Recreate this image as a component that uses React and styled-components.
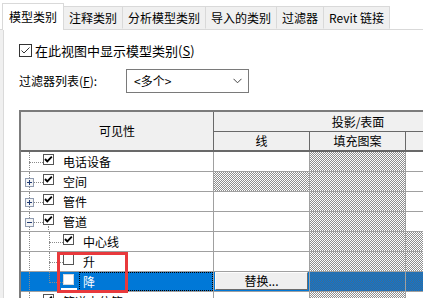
import React from 'react';
import styled, { createGlobalStyle, css } from 'styled-components';

const Global = createGlobalStyle`
  html, body { margin: 0; padding: 0; background: #fff; }
  body {
    font-family: "Noto Sans CJK SC", "Noto Sans", "Liberation Sans", sans-serif;
    font-size: 12px;
    color: #000;
  }
`;

const Root = styled.div`
  width: 423px;
  height: 298px;
  overflow: hidden;
  background: #fff;
  display: flex;
  flex-direction: column;
`;

const TabBar = styled.div`
  flex: none;
  height: 30px;
  box-sizing: border-box;
  display: flex;
  align-items: flex-end;
  padding-left: 2px;
  border-bottom: 1px solid #d9d9d9;
`;

const Tab = styled.div`
  position: relative;
  box-sizing: border-box;
  display: flex;
  align-items: center;
  white-space: nowrap;
  line-height: 14px;
  height: ${p => (p.$active ? 27 : 23)}px;
  padding: 0 ${p => (p.$active ? 6 : 5)}px;
  margin-left: ${p => (p.$first ? 0 : -1)}px;
  margin-bottom: ${p => (p.$active ? -1 : 0)}px;
  border: 1px solid #d9d9d9;
  border-bottom: ${p => (p.$active ? 'none' : '1px solid transparent')};
  background: ${p => (p.$active ? '#fff' : '#f0f0f0')};
  z-index: ${p => (p.$active ? 2 : 1)};
`;

const Body = styled.div`
  flex: 1;
  display: flex;
  min-height: 0;
  border-left: 3px solid #f0f0f0;
`;

const Panel = styled.div`
  flex: 1;
  min-width: 0;
  overflow: hidden;
  background: #fff;
  border-left: 1px solid #dadada;
  padding: 14px 0 0 15px;
  display: flex;
  flex-direction: column;
  align-items: flex-start;
`;

const ShowRow = styled.label`
  display: flex;
  align-items: center;
  height: 13px;
  gap: 3px;
  font-size: 13px;
  line-height: 13px;
  white-space: nowrap;
`;

const FilterRow = styled.div`
  display: flex;
  align-items: center;
  margin-top: 12px;
  height: 24px;
`;

const FilterLabel = styled.span`
  width: 107px;
  white-space: nowrap;
  line-height: 14px;
`;

const Select = styled.div`
  box-sizing: border-box;
  width: 123px;
  height: 24px;
  border: 1px solid #7a7a7a;
  background: #fff;
  display: flex;
  align-items: center;
  justify-content: space-between;
  padding: 0 6px 0 7px;
  line-height: 14px;
`;

const Table = styled.div`
  position: relative;
  flex: none;
  margin-top: 17px;
  width: 483px;
  border-top: 2px solid #7c7c7c;
  border-left: 2px solid #7c7c7c;
`;

const Header = styled.div`
  display: grid;
  grid-template-columns: 193px 96px 96px 96px;
  grid-template-rows: 20px 18px;
  background: #f0f0f0;
  border-bottom: 2px solid #696969;
`;

const HeadCell = styled.div`
  box-sizing: border-box;
  display: flex;
  align-items: center;
  justify-content: center;
  white-space: nowrap;
  line-height: 14px;
  ${p => p.$span && css`grid-row: 1 / 3; border-right: 1px solid #696969;`}
  ${p => p.$group && css`grid-column: 2 / 5; border-bottom: 1px solid #696969;`}
  ${p => p.$sub && css`border-right: 1px solid #696969;`}
`;

const DataRow = styled.div`
  display: grid;
  grid-template-columns: 193px 96px 96px 96px;
  height: 20px;
  box-sizing: border-box;
  border-bottom: 1px solid #a0a0a0;
`;

const Cell = styled.div`
  box-sizing: border-box;
  border-right: 1px solid #a0a0a0;
  display: flex;
  align-items: stretch;
  overflow: hidden;
  background: ${p =>
    p.$selected
      ? p.$hatch
        ? 'repeating-conic-gradient(#41698f 0 25%, #0a78d4 0 50%) 0 0 / 2px 2px'
        : '#0078d7'
      : p.$hatch
        ? 'repeating-conic-gradient(#8e8e8e 0 25%, #ffffff 0 50%) 0 0 / 2px 2px'
        : '#fff'};
  padding: ${p => (p.$button ? '0 0 1px 1px' : '0')};
`;

const Gutter = styled.div`
  position: relative;
  flex: none;
  width: ${p => p.$w}px;
  &::before {
    content: '';
    display: ${p => (p.$v ? 'block' : 'none')};
    position: absolute;
    left: ${p => p.$x}px;
    top: 0;
    ${p => (p.$v === 'half' ? 'height: 11px;' : 'bottom: -1px;')}
    border-left: 1px dotted #8a8a8a;
  }
  &::after {
    content: '';
    display: ${p => (p.$h ? 'block' : 'none')};
    position: absolute;
    left: ${p => p.$x}px;
    right: 0;
    top: 10px;
    border-top: 1px dotted #8a8a8a;
  }
`;

const ExpanderBox = styled.svg`
  position: absolute;
  left: 4px;
  top: 6px;
  z-index: 1;
`;

const CheckSlot = styled.div`
  position: relative;
  flex: none;
  width: 11px;
  padding-top: 2px;
  &::after {
    content: '';
    display: ${p => (p.$stem ? 'block' : 'none')};
    position: absolute;
    left: 5px;
    top: 14px;
    bottom: -1px;
    border-left: 1px dotted #8a8a8a;
  }
  &::before {
    content: '';
    display: ${p => (p.$focus ? 'block' : 'none')};
    position: absolute;
    left: -2px;
    width: 16px;
    top: 16px;
    height: 2px;
    background: #fff;
  }
`;

const Label = styled.div`
  flex: 1;
  margin-left: 5px;
  padding-left: 4px;
  line-height: 19px;
  white-space: nowrap;
  color: ${p => (p.$selected ? '#fff' : '#000')};
  ${p => p.$selected && css`outline: 1px dotted #000; outline-offset: -1px;`}
`;

const ReplaceButton = styled.button`
  flex: 1;
  margin: 0;
  padding: 0;
  box-sizing: border-box;
  font: inherit;
  font-size: 12px;
  line-height: 14px;
  color: #000;
  background: #efefef;
  border: 1px solid;
  border-color: #fdfdfd #6b6b6b #6b6b6b #fdfdfd;
  margin-right: 1px;
`;

const RedMark = styled.div`
  position: absolute;
  left: 36px;
  top: 140px;
  width: 71px;
  height: 41px;
  box-sizing: border-box;
  border: 3px solid #e8393c;
  pointer-events: none;
`;

function Check({ checked, size = 11, thin, light }) {
  return (
    <svg width={size} height={size} viewBox={`0 0 ${size} ${size}`} style={{ display: 'block' }}>
      <rect x="0.5" y="0.5" width={size - 1} height={size - 1} fill="#fff" stroke={light ? '#d8d8d8' : thin ? '#333' : '#555'} />
      {checked && (thin ? (
        <path d="M2.5 6.5 L5 9 L10.5 3.5" fill="none" stroke="#333" strokeWidth="1" />
      ) : (
        <path d="M2 5 L4.3 7.4 L8.8 2.6" fill="none" stroke="#000" strokeWidth="1.9" />
      ))}
    </svg>
  );
}

function Expander({ type }) {
  return (
    <ExpanderBox width="9" height="9" viewBox="0 0 9 9">
      <rect x="0.5" y="0.5" width="8" height="8" fill="#f4f4f4" stroke="#8f9bb0" />
      <path d="M2 4.5 H7" stroke="#1e3a74" strokeWidth="1" />
      {type === 'plus' && <path d="M4.5 2 V7" stroke="#1e3a74" strokeWidth="1" />}
    </ExpanderBox>
  );
}

const tabs = ['模型类别', '注释类别', '分析模型类别', '导入的类别', '过滤器', 'Revit 链接'];

const rows = [
  { label: '电话设备', depth: 0, checked: true, cols: [false, true, false] },
  { label: '空间', depth: 0, expander: 'plus', checked: true, cols: [true, true, false] },
  { label: '管件', depth: 0, expander: 'plus', checked: true, cols: [false, true, false] },
  { label: '管道', depth: 0, expander: 'minus', checked: true, stem: true, cols: [false, true, false] },
  { label: '中心线', depth: 1, checked: true, cols: [false, true, true] },
  { label: '升', depth: 1, checked: false, cols: [false, true, true] },
  { label: '降', depth: 1, checked: false, last: true, selected: true, cols: [false, true, true] },
  { label: '管道占位符', depth: 0, checked: true, cols: [false, true, false] },
];

function Row({ row }) {
  const sel = row.selected;
  return (
    <DataRow>
      <Cell $selected={sel}>
        <Gutter $w={22} $x={8} $v="full" $h={row.depth === 0}>
          {row.expander && <Expander type={row.expander} />}
        </Gutter>
        {row.depth === 1 && <Gutter $w={20} $x={6} $v={row.last ? 'half' : 'full'} $h />}
        <CheckSlot $stem={row.stem} $focus={sel}>
          <Check checked={row.checked} light={sel} />
        </CheckSlot>
        <Label $selected={sel}>{row.label}</Label>
      </Cell>
      {row.cols.map((h, i) => (
        <Cell key={i} $hatch={h} $selected={sel} $button={sel && i === 0}>
          {sel && i === 0 && <ReplaceButton>替换...</ReplaceButton>}
        </Cell>
      ))}
    </DataRow>
  );
}

export default function App() {
  return (
    <Root>
      <Global />
      <TabBar>
        {tabs.map((t, i) => (
          <Tab key={t} $active={i === 0} $first={i === 0}>{t}</Tab>
        ))}
      </TabBar>
      <Body>
        <Panel>
          <ShowRow>
            <Check checked size={13} thin />
            <span>在此视图中显示模型类别(<u>S</u>)</span>
          </ShowRow>
          <FilterRow>
            <FilterLabel>过滤器列表(<u>F</u>):</FilterLabel>
            <Select>
              <span>&lt;多个&gt;</span>
              <svg width="9" height="6" viewBox="0 0 9 6">
                <path d="M0.5 0.8 L4.5 4.8 L8.5 0.8" fill="none" stroke="#444" strokeWidth="1" />
              </svg>
            </Select>
          </FilterRow>
          <Table>
            <Header>
              <HeadCell $span>可见性</HeadCell>
              <HeadCell $group>投影/表面</HeadCell>
              <HeadCell $sub>线</HeadCell>
              <HeadCell $sub>填充图案</HeadCell>
              <HeadCell $sub>透明度</HeadCell>
            </Header>
            {rows.map(r => <Row key={r.label} row={r} />)}
            <RedMark />
          </Table>
        </Panel>
      </Body>
    </Root>
  );
}
